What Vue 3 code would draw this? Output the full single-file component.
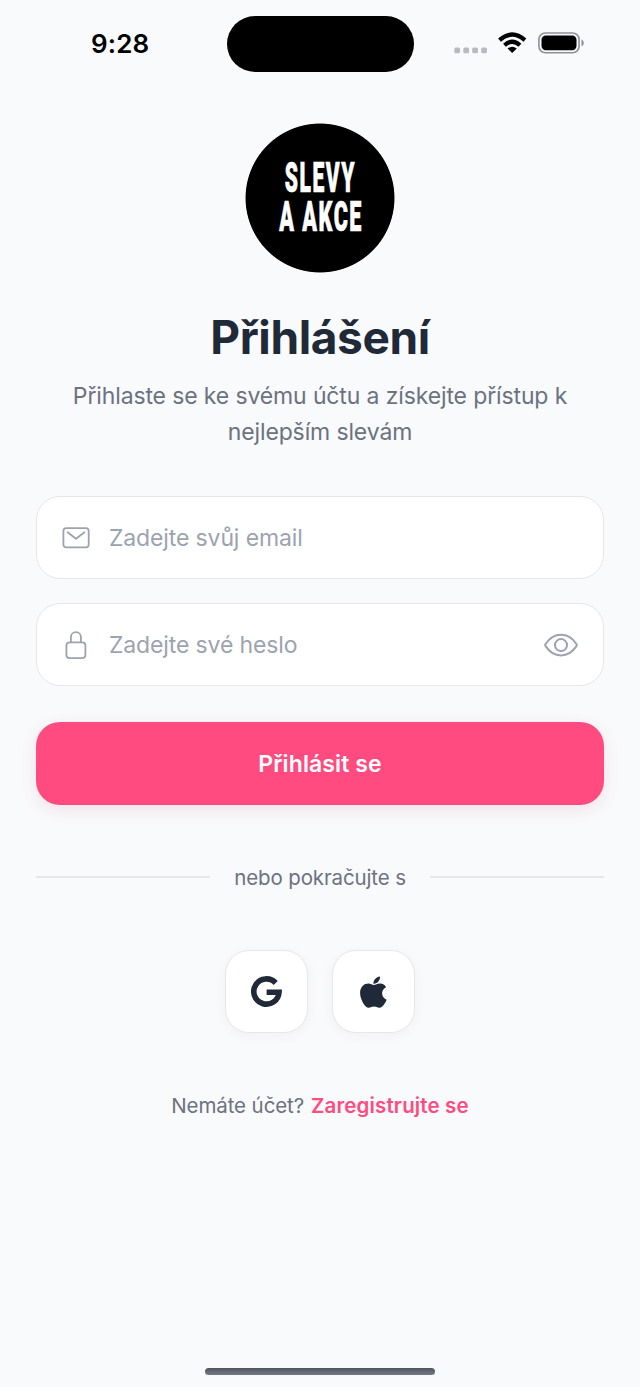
<script setup>
const fields = [
  { id: 'email', type: 'email', hint: 'Zadejte svůj email' },
  { id: 'password', type: 'password', hint: 'Zadejte své heslo' },
]
</script>

<template>
  <div class="screen">
    <header class="status">
      <div class="time">9:28</div>
      <div class="island"></div>
      <div class="signals">
        <svg width="134" height="28" viewBox="0 0 134 28">
          <g fill="#b8bac0">
            <rect x="4.3" y="17.5" width="5.8" height="5.8" rx="1.6" />
            <rect x="13.3" y="17.5" width="5.8" height="5.8" rx="1.6" />
            <rect x="22.2" y="17.5" width="5.8" height="5.8" rx="1.6" />
            <rect x="31.2" y="17.5" width="5.8" height="5.8" rx="1.6" />
          </g>
          <g fill="none" stroke="#000" stroke-width="4.2">
            <path d="M49.5 10.1Q62.2-1 74.9 10.1" />
            <path d="M54.5 15.200Q62.2 8.300 69.900 15.200" />
          </g>
          <path d="M57.6 18.500Q62.200 14.800 66.800 18.500L62.200 23Z" fill="#000" />
          <rect x="88.9" y="3" width="40.2" height="19.8" rx="6.5" fill="none" stroke="#8e9096" stroke-width="1.6" />
          <rect x="91.5" y="5.6" width="35" height="14.6" rx="4.2" fill="#000" />
          <path d="M131.5 9.6c3 1.3 3 5.4 0 6.7z" fill="#8e9096" />
        </svg>
      </div>
    </header>

    <div class="logo">
      <div>SLEVY</div>
      <div class="wide">A AKCE</div>
    </div>

    <h1>Přihlášení</h1>
    <p class="lead">Přihlaste se ke svému účtu a získejte přístup k<br />nejlepším slevám</p>

    <form class="form" @submit.prevent>
      <label v-for="f in fields" :key="f.id" class="field">
        <svg v-if="f.id === 'email'" class="lead-icon" viewBox="0 0 30 30">
          <rect x="2.4" y="5.1" width="25.3" height="19.3" rx="2.8" />
          <path d="M6.6 9.2 15 15.800l8.4-6.6" />
        </svg>
        <svg v-else class="lead-icon" viewBox="0 0 30 30">
          <rect x="5.4" y="12.3" width="19" height="15.8" rx="3.2" />
          <path d="M9.9 12.3V7.1a5 5 0 0 1 10 0v5.2" />
        </svg>
        <input :class="f.id" :type="f.type" :placeholder="f.hint" />
        <svg v-if="f.id === 'password'" class="eye" viewBox="0 0 36 26">
          <path d="M2.400 12.300C5.700 7.200 11.400 2.800 18 2.800s12.300 4.400 15.600 9.500q.5.800 0 1.600c-3.300 5-9 9.500-15.600 9.500S5.700 18.900 2.400 13.900q-.5-.8 0-1.600z" />
          <circle cx="18" cy="13.100" r="6" />
        </svg>
      </label>
      <button class="submit"><span>Přihlásit se</span></button>
    </form>

    <div class="divider"><i></i><span>nebo pokračujte s</span><i></i></div>

    <div class="social">
      <button>
        <svg width="32" height="32" viewBox="0 0 32 32">
          <path d="M24.700 7A12.600 12.600 0 1 0 28 16.300H15.600" fill="none" stroke="#1f2937" stroke-width="5.600" />
        </svg>
      </button>
      <button>
        <svg width="32" height="32" viewBox="0 0 32 32">
          <path transform="translate(-1.700 0) scale(1.05 1)" fill="#1f2937" d="M28.300 11.200c-.2.100-3.700 2.100-3.700 6.100 0 4.700 4.100 6.300 4.200 6.400 0 .1-.6 2.200-2.100 4.400-1.300 1.900-2.700 3.700-4.800 3.700s-2.600-1.200-5-1.200c-2.300 0-3.200 1.200-5.100 1.200s-3.200-1.700-4.800-3.900C5.300 25.200 3.600 21 3.600 17.100c0-6.200 4-9.500 8-9.500 2.100 0 3.800 1.400 5.200 1.400 1.300 0 3.300-1.500 5.700-1.500.9 0 4.200.1 5.800 3.700zM21 5.500c.9-1.200 1.600-2.800 1.600-4.300 0-.3 0-.5-.1-.7-1.500.1-3.400 1.100-4.500 2.400-.9 1-1.700 2.500-1.700 4.200v.6c2 .2 3.700-.8 4.700-2.200z" />
        </svg>
      </button>
    </div>

    <p class="register"><span class="ask">Nemáte účet?</span><a>Zaregistrujte se</a></p>

    <div class="home"></div>
  </div>
</template>

<style>
body { background: #f9fafc; }
</style>

<style scoped>
* { box-sizing: border-box; }
.screen {
  width: 640px;
  height: 1387px;
  background: #f9fafc;
  font-family: Inter, "Liberation Sans", sans-serif;
  display: flex;
  flex-direction: column;
  align-items: center;
  padding: 0 36px;
  overflow: hidden;
  color: #6b7280;
}
.status {
  width: 640px;
  height: 123px;
  padding-top: 16px;
  display: grid;
  grid-template-columns: 226.500px 187px 226.500px;
  align-items: start;
  flex: none;
}
.time {
  padding-left: 91px;
  line-height: 56px;
  font-size: 26px;
  font-weight: 600;
  letter-spacing: 0.15px;
  color: #000;
  white-space: nowrap;
}
.island { height: 55.500px; border-radius: 28px; background: #000; }
.signals { padding: 14px 0 0 36.500px; height: 55px; }
.signals svg { display: block; }
.logo {
  width: 150px;
  height: 150px;
  flex: none;
  background: radial-gradient(circle, #000 74px, transparent 74.900px);
  color: #fff;
  font: 900 42.200px/39px Roboto, "Liberation Sans", sans-serif;
  letter-spacing: 3px;
  -webkit-text-stroke: 0.700px #fff;
  display: flex;
  flex-direction: column;
  align-items: center;
  padding-top: 35px;
}
.logo div { transform: scaleX(0.5); white-space: nowrap; flex: none; padding-left: 3px; }
.logo .wide { transform: scaleX(0.512); }
h1 {
  margin: 33px 0 0;
  font-size: 46px;
  line-height: 62px;
  font-weight: 700;
  letter-spacing: -0.4px;
  color: #1f2937;
  white-space: nowrap;
}
.lead {
  margin: 10px 0 0;
  font-size: 23px;
  line-height: 36px;
  letter-spacing: -0.13px;
  text-align: center;
  white-space: nowrap;
}
.form { width: 568px; margin-top: 46px; display: flex; flex-direction: column; gap: 24px; }
.field {
  height: 83px;
  border: 1.500px solid #e5e7eb;
  border-radius: 24px;
  background: #fff;
  display: flex;
  align-items: center;
  padding: 0 25px 0 24px;
}
.lead-icon { width: 30px; height: 30px; flex: none; fill: none; stroke: #9ca3af; stroke-width: 1.800; stroke-linecap: round; stroke-linejoin: round; }
.eye { width: 36px; height: 26px; margin-right: -1px; flex: none; fill: none; stroke: #9ca3af; stroke-width: 2; stroke-linejoin: round; }
input {
  flex: 1;
  min-width: 0;
  margin-left: 18px;
  padding: 0;
  border: 0;
  outline: 0;
  background: none;
  font: 400 23px Inter, "Liberation Sans", sans-serif;
  letter-spacing: -0.13px;
}
input::placeholder { color: #9ca3af; opacity: 1; }
.submit {
  height: 83px;
  margin-top: 12px;
  border: 0;
  border-radius: 24px;
  background: #ff4b80;
  color: #fff;
  font: 600 23px Inter, "Liberation Sans", sans-serif;
  letter-spacing: 0.1px;
  box-shadow: 0 6px 18px rgba(255, 75, 128, 0.08), 0 4px 20px rgba(80, 60, 30, 0.05);
}
.divider { width: 568px; height: 36px; margin-top: 54px; display: flex; align-items: center; gap: 24px; font-size: 20.500px; letter-spacing: -0.13px; white-space: nowrap; }
.divider i { flex: 1; height: 1.500px; background: #e5e7eb; }
.social { display: flex; gap: 24px; margin-top: 54.500px; }
.social button {
  width: 83px;
  height: 83px;
  padding: 2px 0 0;
  border: 1.500px solid #e5e7eb;
  border-radius: 24px;
  background: #fff;
  display: grid;
  place-items: center;
  box-shadow: 0 3px 12px rgba(90, 50, 40, 0.05);
}
.social svg { display: block; }
.register { margin: 58px 0 0; line-height: 30px; font-size: 20.500px; display: flex; gap: 7px; white-space: nowrap; }
.ask { letter-spacing: -0.1px; }
.register a { color: #ff4b80; font-weight: 600; letter-spacing: 0.14px; }
.home { width: 230px; height: 7px; margin-top: auto; margin-bottom: 12px; flex: none; border-radius: 4px; background: linear-gradient(#50565f, #747983); }
</style>
